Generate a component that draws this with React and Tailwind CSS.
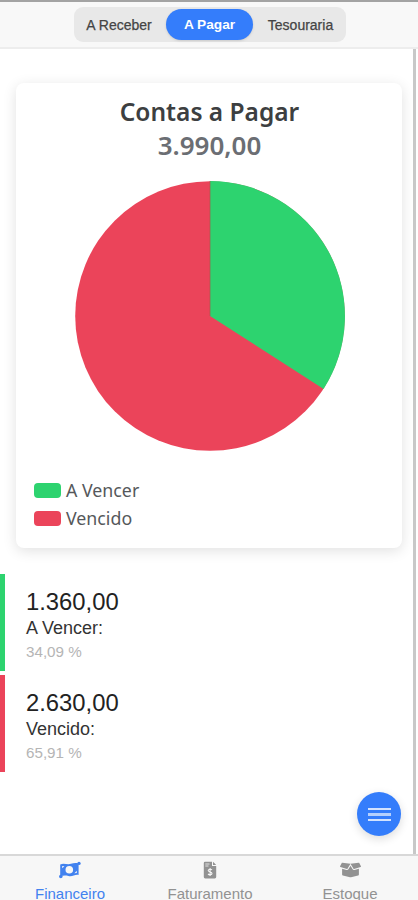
import { FaBoxOpen } from 'react-icons/fa';

const slices = [
  { label: 'A Vencer', value: '1.360,00', percent: '34,09 %', swatch: 'bg-[#2dd36f]', border: 'border-[#2dd36f]' },
  { label: 'Vencido', value: '2.630,00', percent: '65,91 %', swatch: 'bg-[#eb445a]', border: 'border-[#eb445a]' },
];

const CashIcon = () => (
  <svg viewBox="0 0 22 18" className="w-[22px] h-[18px] shrink-0" fill="currentColor">
    <path
      fillRule="evenodd"
      d="M1.2 3.5C5 1.3 8 4.2 12 2.8C14.5 1.9 17 1.8 19.6 2.4V14C16 13.2 13.5 15.9 9.5 15C6.5 14.2 4.2 14.4 1.2 15.2ZM10.3 5A3.8 3.8 0 1 0 10.3 12.6A3.8 3.8 0 1 0 10.3 5ZM3.2 5V7.2L5.4 5.2ZM17.8 9.8L15.4 12.3L17.8 12Z"
    />
    <circle cx="20" cy="2.4" r="1.7" />
    <circle cx="1.8" cy="15.5" r="1.8" />
  </svg>
);

const InvoiceIcon = () => (
  <svg viewBox="0 0 14 18" className="w-[14px] h-[18px] shrink-0">
    <path d="M2 .8H9V5H13.2V16Q13.2 17.4 11.8 17.4H2.2Q.8 17.4 .8 16V2Q.8.8 2 .8ZM10 .8L13.2 4H10Z" fill="currentColor" />
    <path d="M2.3 3H6.5M2.3 5H5.5" stroke="#f7f7f7" strokeWidth=".8" />
    <path d="M9 8.8C7.8 7.8 5.2 8.1 5.2 9.6C5.2 11.3 9 10.6 9 12.4C9 14 6.2 14.1 5 13M7.1 7V15" fill="none" stroke="#f7f7f7" strokeWidth="1.1" />
  </svg>
);

const tabs = [
  { label: 'Financeiro', icon: <CashIcon />, color: 'text-[#4282ef]' },
  { label: 'Faturamento', icon: <InvoiceIcon />, color: 'text-[#929292]' },
  { label: 'Estoque', icon: <FaBoxOpen className="w-[21px] h-[18px] shrink-0" />, color: 'text-[#929292]' },
];

const App = () => {
  return (
    <div className="relative flex flex-col w-full h-[900px] overflow-hidden bg-white font-['Liberation_Sans',Arial,sans-serif]">
      {/* Header */}
      <header className="h-[49px] shrink-0 border-t-2 border-t-[#a3a3a3] border-b-2 border-b-[#ededed] bg-[#f8f8f8] pt-[5px] pl-[2px] flex justify-center">
        <div className="flex items-center w-[272px] h-[35px] rounded-[9px] bg-[#e8e8e8] text-[14px] text-[#444] [-webkit-text-stroke:0.25px]">
          <button className="w-[92px] pt-0.5 pr-0.5 whitespace-nowrap">A Receber</button>
          <button className="w-[87px] h-[31px] pt-0.5 rounded-full bg-[#347dfb] text-[13.7px] text-white font-bold shadow-sm [-webkit-text-stroke:0px]">A Pagar</button>
          <button className="w-[93px] pt-0.5 pl-0.5 whitespace-nowrap">Tesouraria</button>
        </div>
      </header>

      <main className="flex-1 min-h-0 mr-[2px] border-r-[3px] border-[#c8c8c8] pt-[34px]">
        {/* Chart */}
        <section className="ml-4 mr-[11px] h-[465px] rounded-lg bg-white shadow-[0_3px_14px_rgba(0,0,0,0.12)] pt-[12px] pl-[1px] font-['Noto_Sans',sans-serif]">
          <h1 className="text-center text-[24.5px] leading-[33px] font-semibold text-[#3d3f41]">Contas a Pagar</h1>
          <p className="text-center text-[26px] leading-[35px] font-semibold text-[#6b6e73]">3.990,00</p>
          <svg viewBox="0 0 270 270" className="block w-[270px] h-[270px] mx-auto mt-[18px] mb-[25px]">
            <circle cx="135" cy="135" r="134.8" fill="#eb445a" />
            <path d="M135 135V0A135 135 0 0 1 248.6 207.9Z" fill="#2dd36f" />
            <path d="M135 0V135" stroke="#a85a4c" strokeWidth="0.7" />
          </svg>
          <ul className="ml-[17px]">
            {slices.map((slice) => (
              <li key={slice.label} className="flex items-center gap-[5px] h-7 text-[17.8px] text-[#55585b]">
                <span className={`w-[27px] h-[15px] rounded-[4px] ${slice.swatch}`} />
                {slice.label}
              </li>
            ))}
          </ul>
        </section>

        {/* Totals */}
        <section className="mt-[26px] flex flex-col gap-1">
          {slices.map((slice) => (
            <div key={slice.label} className={`h-[97px] border-l-[5px] pl-[21px] pt-[14px] ${slice.border}`}>
              <p className="text-[23.8px] leading-[27px] text-[#222]">{slice.value}</p>
              <p className="text-[18px] leading-[27px] text-[#333]">{slice.label}:</p>
              <p className="text-[15.2px] leading-[20px] text-[#b5b5b5]">{slice.percent}</p>
            </div>
          ))}
        </section>
      </main>

      <button className="absolute left-[357px] top-[792px] w-11 h-11 rounded-full bg-[#347dfb] shadow-[0_3px_10px_rgba(0,0,0,0.14)] flex flex-col items-center justify-center gap-[3px]">
        <span className="w-[23px] h-[2px] bg-[#d3e3fe]" />
        <span className="w-[23px] h-[3px] bg-[#b5d0fd]" />
        <span className="w-[23px] h-[2px] bg-[#d3e3fe]" />
      </button>

      {/* Bottom tabs */}
      <nav className="h-[46px] shrink-0 border-t-2 border-[#d8d8d8] bg-[#f7f7f7] flex">
        {tabs.map((tab) => (
          <div key={tab.label} className={`w-[140px] shrink-0 flex flex-col items-center pt-[5px] ${tab.color}`}>
            {tab.icon}
            <span className="mt-2 text-[15px] leading-[13px] shrink-0">{tab.label}</span>
          </div>
        ))}
      </nav>
    </div>
  );
};

export default App;
